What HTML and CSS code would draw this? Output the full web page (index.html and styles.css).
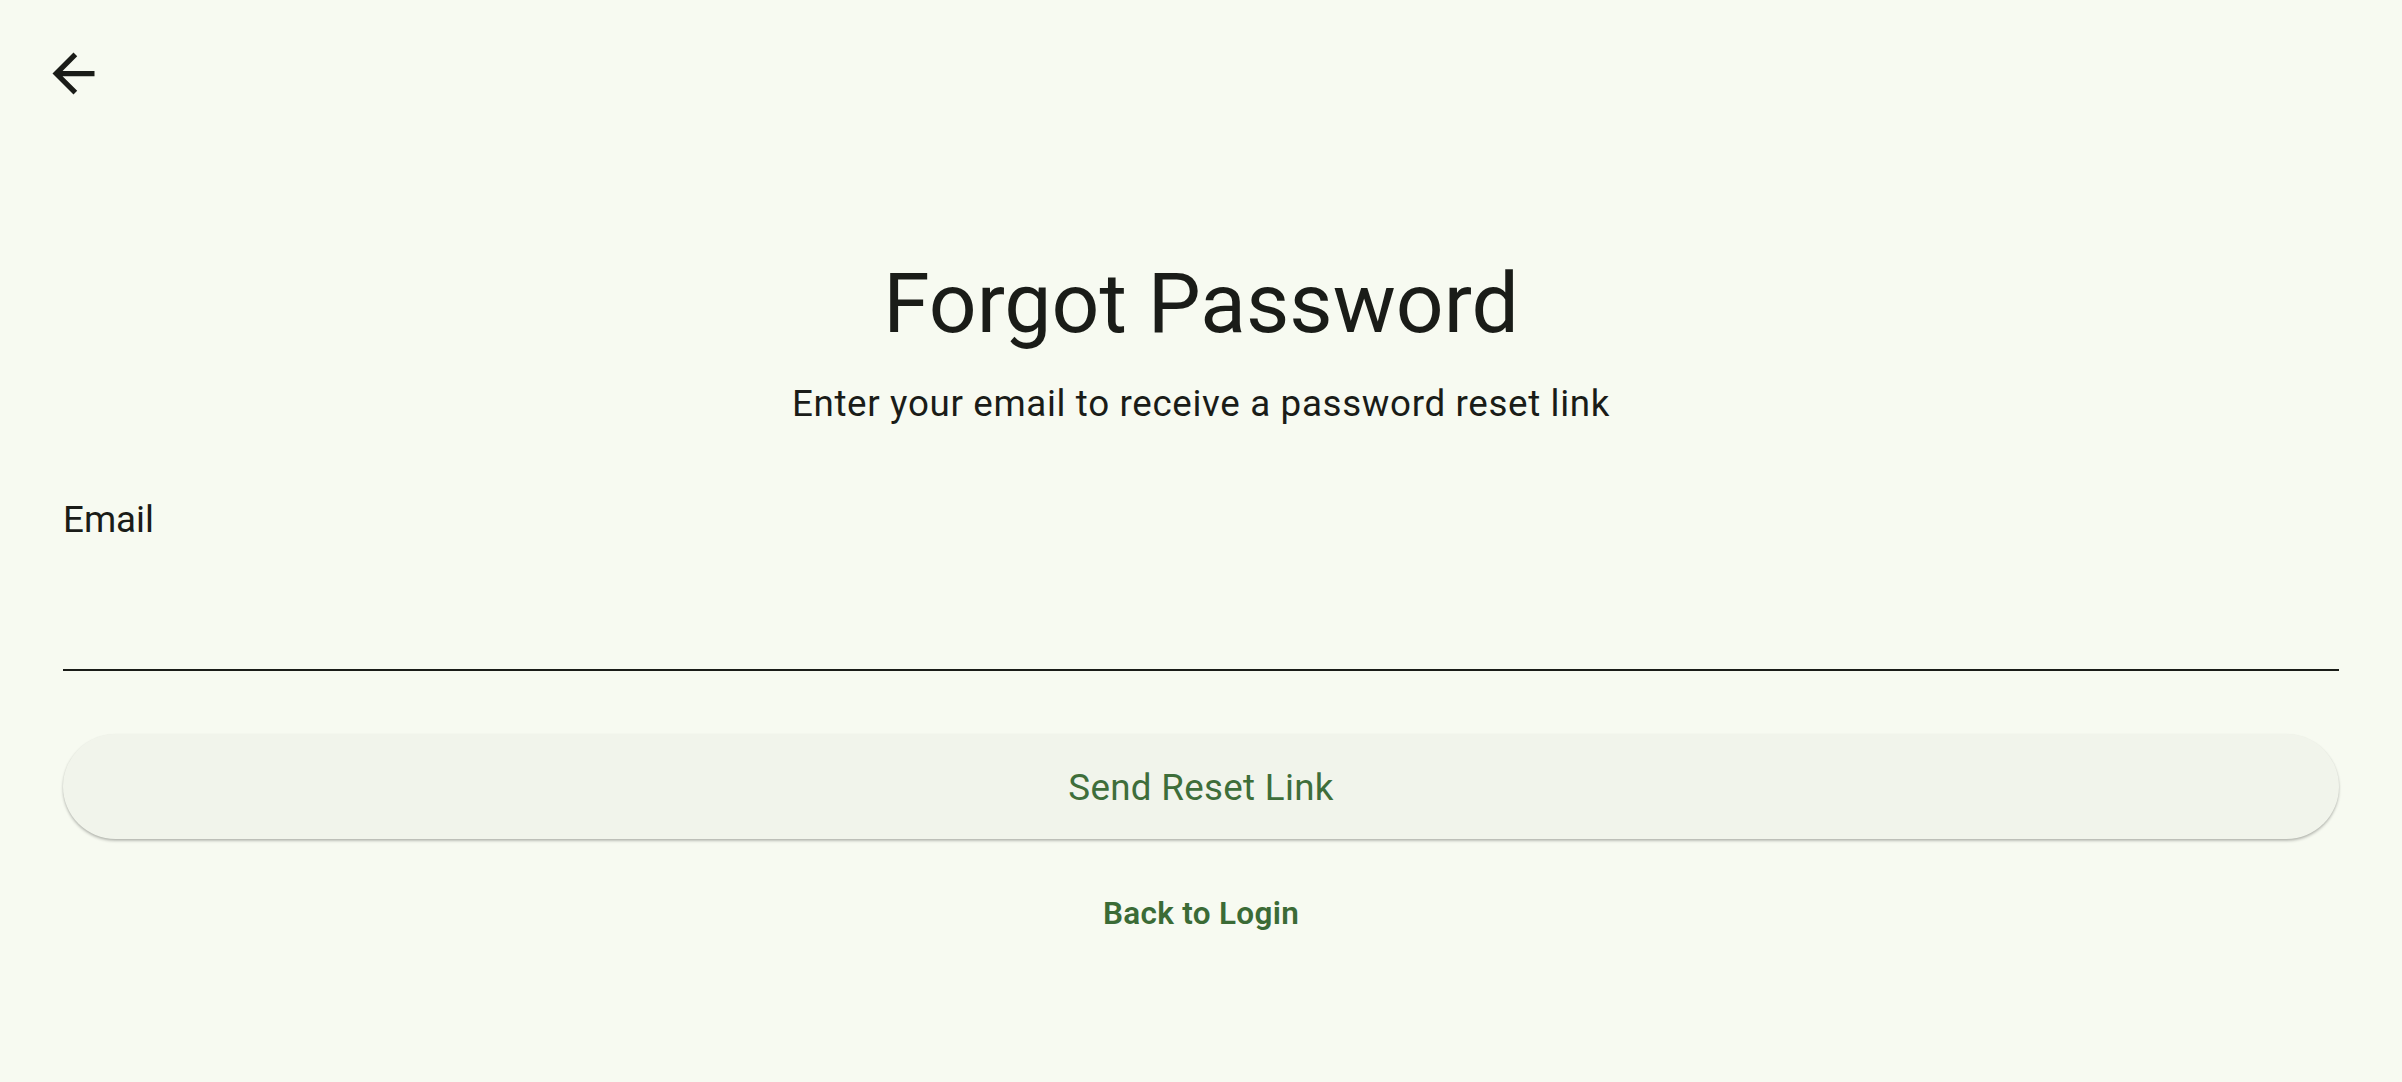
FILE: index.html
```html
<!DOCTYPE html>
<html lang="en">
<head>
<meta charset="utf-8">
<title>Forgot Password</title>
<link rel="stylesheet" href="styles.css">
</head>
<body>
<div class="page">
  <header class="appbar">
    <button class="back-btn" aria-label="Back">
      <svg class="back-icon" viewBox="0 0 24 24" aria-hidden="true"><path d="M20 11H7.83l5.59-5.59L12 4l-8 8 8 8 1.41-1.41L7.83 13H20v-2z"/></svg>
    </button>
  </header>
  <main class="content">
    <h1 class="title">Forgot Password</h1>
    <p class="subtitle">Enter your email to receive a password reset link</p>
    <label class="field">
      <span class="field-label">Email</span>
      <span class="field-input"></span>
    </label>
    <button class="primary-btn">Send Reset Link</button>
    <div class="link-row"><a class="text-link" href="#">Back to Login</a></div>
  </main>
</div>
</body>
</html>
```
FILE: styles.css
```css
* { box-sizing: border-box; }
html, body {
  margin: 0;
  padding: 0;
  background: #f7faf1;
}
body {
  font-family: Roboto, "Noto Sans", sans-serif;
  color: #1a1c18;
}
.page {
  width: 2402px;
  height: 1082px;
  overflow: hidden;
  display: flex;
  flex-direction: column;
}
.appbar {
  height: 147px;
  flex: none;
  display: flex;
  align-items: center;
}
.back-btn {
  width: 147px;
  height: 147px;
  border: none;
  background: transparent;
  padding: 0;
  display: flex;
  align-items: center;
  justify-content: center;
}
.back-icon {
  width: 63px;
  height: 63px;
  fill: #1a1c18;
}
.content {
  padding: 0 63px;
  display: flex;
  flex-direction: column;
}
.title {
  margin: 107px 0 0;
  font-size: 84px;
  font-weight: 400;
  line-height: normal;
  text-align: center;
  color: #1a1c18;
}
.subtitle {
  margin: 29px 0 0;
  font-size: 36.75px;
  line-height: normal;
  letter-spacing: 0.65px;
  text-align: center;
  color: #1a1c18;
}
.field {
  margin-top: 73px;
  display: flex;
  flex-direction: column;
}
.field-label {
  font-size: 36.75px;
  line-height: normal;
  color: #1a1c18;
}
.field-input {
  height: 133px;
  border-bottom: 2.625px solid #1a1c18;
  margin-top: -3px;
}
.primary-btn {
  margin-top: 63px;
  height: 105px;
  flex: none;
  border: none;
  border-radius: 60px;
  background: #f1f4eb;
  color: #3e6e3a;
  font-family: Roboto, "Noto Sans", sans-serif;
  font-size: 36.75px;
  font-weight: 400;
  letter-spacing: 0.3px;
  padding: 2px 0 0;
  box-shadow: 0 2px 3px rgba(0, 0, 0, 0.22), 0 1px 2px rgba(0, 0, 0, 0.08);
}
.link-row {
  margin-top: 56px;
  display: flex;
  justify-content: center;
}
.text-link {
  font-size: 31.5px;
  font-weight: 600;
  line-height: normal;
  color: #3b6b36;
  text-decoration: none;
  letter-spacing: 0.3px;
}
```
